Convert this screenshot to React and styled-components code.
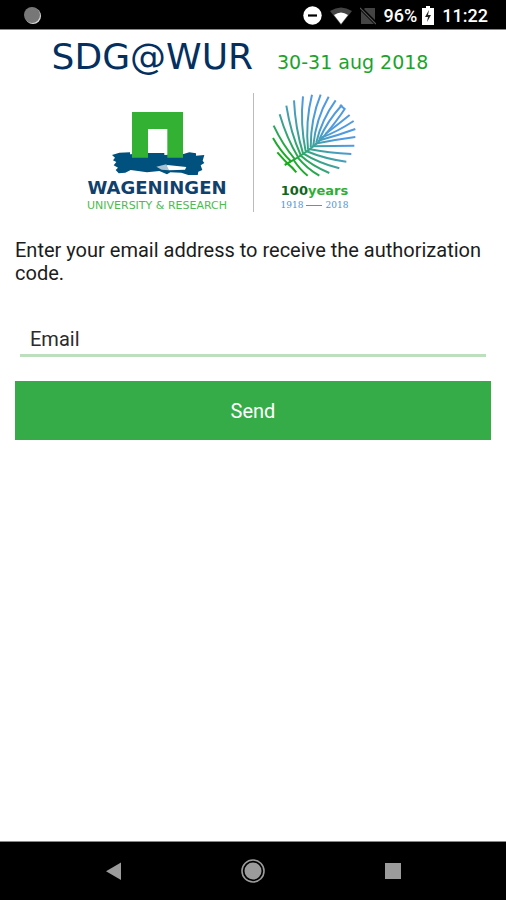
import React from "react";
import styled, { createGlobalStyle } from "styled-components";

const GlobalStyle = createGlobalStyle`
  * {
    box-sizing: border-box;
  }

  body {
    margin: 0;
    background: #fff;
    color: #1c1c1c;
    font-family: Roboto, "Liberation Sans", sans-serif;
  }
`;

// Leaf geometry: the point where a frond leaves the spine, its bend and its tip.
const fronds = [
  [127, 232, 112, 216, 96, 198],
  [138, 226, 106, 196, 83, 155],
  [149, 219, 112, 176, 85, 118],
  [158, 212, 124, 156, 103, 84],
  [166, 206, 136, 140, 123, 58],
  [173, 201, 150, 126, 146, 42],
  [181, 195, 164, 112, 173, 30],
  [188, 190, 180, 104, 200, 25],
  [196, 183, 196, 98, 226, 25],
  [204, 176, 212, 98, 250, 31],
  [213, 168, 228, 102, 271, 42],
  [222, 159, 246, 104, 290, 56],
  [240, 143, 276, 116, 313, 86],
  [228, 154, 276, 136, 325, 104],
  [218, 163, 276, 148, 330, 128],
  [208, 172, 270, 160, 330, 152],
  [199, 180, 260, 178, 327, 178],
  [190, 188, 250, 200, 318, 203],
  [182, 194, 240, 218, 303, 226],
  [173, 201, 220, 230, 282, 246],
  [165, 207, 202, 240, 252, 260],
  [157, 213, 184, 246, 222, 268],
  [145, 221, 164, 250, 187, 268],
  [127, 232, 140, 242, 153, 258],
];

const WageningenMark = () => (
  <svg width="96" height="64" viewBox="-9 0 288 192" aria-hidden="true">
    <path
      fill="#00517d"
      d="M0 132 L22 125 L54 124 L54 130 L105 126 L157 126 L157 132 L212 130 L232 124 L252 127 L252 134 L277 132 L272 149 L277 156 L266 163 L271 177 L259 182 L257 193 L232 193 L208 185 L175 184 L165 190 L142 180 L105 184 L56 177 L40 185 L20 187 L11 177 L18 170 L5 163 L13 153 L3 148 L9 140 Z"
    />
    <path fill="#fff" d="M108 54 H166 V124 H108 Z" />
    <path fill="#32b133" d="M60 3 H213 V140 H166 V54 H108 V140 H60 Z" />
    <path fill="#fff" d="M166 162 L223 168 L219 176 L171 178 L161 170 Z" />
    <path fill="#a9c3d2" d="M133 167 L163 160 L171 178 L149 176 Z" />
  </svg>
);

const LeafMark = () => (
  <svg width="85" height="85" viewBox="80 20 255 255" aria-hidden="true">
    <defs>
      <linearGradient
        id="leaf"
        gradientUnits="userSpaceOnUse"
        x1="125"
        y1="220"
        x2="235"
        y2="110"
      >
        <stop offset="0" stopColor="#18ab1c" />
        <stop offset="0.45" stopColor="#3aa38f" />
        <stop offset="1" stopColor="#4f9ae0" />
      </linearGradient>
    </defs>
    <g fill="none" stroke="url(#leaf)" strokeWidth="6">
      {fronds.map(([x, y, bendX, bendY, tipX, tipY]) => (
        <path
          key={`${tipX}-${tipY}`}
          d={`M${x} ${y} Q${bendX} ${bendY} ${tipX} ${tipY}`}
        />
      ))}
      <path d="M118 236 Q200 192 238 147 T298 68 L284 56" />
    </g>
  </svg>
);

const StatusBar = () => (
  <StatusRow>
    <svg width="18" height="18" viewBox="0 0 18 18" aria-hidden="true">
      <circle cx="9" cy="9" r="8" fill="#d9d9d9" />
      <circle cx="8" cy="8" r="8" fill="#777" />
    </svg>
    <StatusIcons>
      <svg width="19" height="19" viewBox="0 0 19 19" aria-hidden="true">
        <circle cx="9.5" cy="9.5" r="9.2" fill="#fff" />
        <path d="M5 9.5 H14" stroke="#000" strokeWidth="2.2" />
      </svg>
      <svg width="22" height="18" viewBox="0 0 22 18" aria-hidden="true">
        <path fill="#444" d="M0 4 Q11 -3 22 4 L11 18 Z" />
        <path fill="#fff" d="M4 8 Q11 3 18 8 L11 17 Z" />
      </svg>
      <svg width="16" height="18" viewBox="0 0 16 18" aria-hidden="true">
        <path fill="#444" d="M5 1 H15 V13 L4 2 Z M1 4 L14 17 H1 Z" />
        <path d="M0 1 L16 17" stroke="#555" strokeWidth="1.2" />
      </svg>
      <Battery>
        <StatusText>96%</StatusText>
        <svg width="12" height="19" viewBox="0 0 12 19" aria-hidden="true">
          <path fill="#fff" d="M4 0 H8 V2 H12 V19 H0 V2 H4 Z" />
          <path fill="#222" d="M7 4 L3 11 H6 L5 16 L9 9 H6 Z" />
        </svg>
      </Battery>
      <StatusText>11:22</StatusText>
    </StatusIcons>
  </StatusRow>
);

const NavigationBar = () => (
  <NavRow>
    <NavButton type="button" aria-label="Back">
      <svg width="24" height="24" viewBox="0 0 24 24">
        <path fill="#9b9b9b" d="M20 3.5 V21 L5 12.2 Z" />
      </svg>
    </NavButton>
    <NavButton type="button" aria-label="Home">
      <svg width="24" height="24" viewBox="0 0 24 24">
        <circle cx="12" cy="12" r="11" fill="none" stroke="#9b9b9b" strokeWidth="1.6" />
        <circle cx="12" cy="12" r="8.5" fill="#9b9b9b" />
      </svg>
    </NavButton>
    <NavButton type="button" aria-label="Overview">
      <svg width="24" height="24" viewBox="0 0 24 24">
        <path fill="#9b9b9b" d="M4 4 H20 V20 H4 Z" />
      </svg>
    </NavButton>
  </NavRow>
);

const App = () => (
  <Screen>
    <GlobalStyle />
    <StatusBar />
    <Content>
      <Heading>
        <Title>SDG@WUR</Title>
        <EventDate>30-31 aug 2018</EventDate>
      </Heading>
      <Logos>
        <University>
          <WageningenMark />
          <UniversityName>WAGENINGEN</UniversityName>
          <UniversityTagline>UNIVERSITY &amp; RESEARCH</UniversityTagline>
        </University>
        <Anniversary>
          <LeafMark />
          <Years>
            <b>100</b>years
          </Years>
          <Period>
            1918 <Dash /> 2018
          </Period>
        </Anniversary>
      </Logos>
      <Form onSubmit={event => event.preventDefault()}>
        <Intro>
          Enter your email address to receive the authorization code.
        </Intro>
        <EmailInput type="email" placeholder="Email" aria-label="Email" />
        <SendButton type="submit">Send</SendButton>
      </Form>
    </Content>
    <NavigationBar />
  </Screen>
);

const Screen = styled.div`
  display: flex;
  flex-direction: column;
  min-height: 100vh;
`;

const StatusRow = styled.div`
  display: flex;
  align-items: center;
  justify-content: space-between;
  height: 30px;
  padding: 2px 18px 0 24px;
  background: #000;
  border-bottom: 1px solid #888;
`;

const StatusIcons = styled.div`
  display: flex;
  align-items: center;
  gap: 8px;
`;

const Battery = styled.div`
  display: flex;
  align-items: center;
  gap: 5px;
`;

const StatusText = styled.span`
  color: #fff;
  font-size: 18px;
  font-weight: 500;
  line-height: 20px;
`;

const Content = styled.main`
  flex: 1;
`;

const Heading = styled.header`
  display: flex;
  align-items: baseline;
  justify-content: center;
  gap: 24px;
  padding: 5px 26px 0 0;
  font-family: "DejaVu Sans", Verdana, sans-serif;
`;

const Title = styled.h1`
  margin: 0;
  color: #04305f;
  font-size: 36px;
  font-weight: 400;
  line-height: 44px;
`;

const EventDate = styled.span`
  color: #1ba32a;
  font-size: 19px;
`;

const Logos = styled.div`
  display: flex;
  justify-content: center;
  padding: 14px 62px 0 0;
  font-family: "DejaVu Sans", Verdana, sans-serif;
`;

const University = styled.div`
  display: flex;
  flex-direction: column;
  align-items: center;
  padding: 18px 26px 0 0;
  border-right: 1px solid #bbb;
`;

const UniversityName = styled.span`
  margin-top: 2px;
  color: #10406c;
  font-size: 18px;
  font-weight: 700;
  line-height: 22px;
`;

const UniversityTagline = styled.span`
  color: #4dbb50;
  font-size: 11px;
  line-height: 13px;
`;

const Anniversary = styled.div`
  display: flex;
  flex-direction: column;
  align-items: center;
  padding-left: 18px;
`;

const Years = styled.span`
  margin-top: 4px;
  color: #2fae35;
  font-size: 13px;
  font-weight: 700;
  line-height: 18px;

  b {
    color: #10661c;
  }
`;

const Period = styled.span`
  display: flex;
  align-items: center;
  gap: 3px;
  color: #4d94dc;
  font-family: "DejaVu Serif", serif;
  font-size: 9px;
  line-height: 10px;
`;

const Dash = styled.i`
  width: 16px;
  height: 1px;
  background: #4d94dc;
`;

const Form = styled.form`
  display: flex;
  flex-direction: column;
  padding: 27px 15px 0;
`;

const Intro = styled.p`
  margin: 0;
  font-size: 20px;
  line-height: 23px;
`;

const EmailInput = styled.input`
  height: 36px;
  margin: 36px 5px 24px;
  padding: 2px 10px 0;
  border: 0;
  border-bottom: 3px solid #bddfbe;
  outline: 0;
  background: transparent;
  font: inherit;
  font-size: 20px;

  &::placeholder {
    color: #2b2b2b;
    opacity: 1;
  }
`;

const SendButton = styled.button`
  height: 59px;
  border: 0;
  background: #36ac49;
  color: #fff;
  font: inherit;
  font-size: 20px;
  cursor: pointer;
`;

const NavRow = styled.nav`
  display: flex;
  align-items: center;
  justify-content: space-around;
  height: 59px;
  padding: 0 43px;
  border-top: 1px solid #888;
  background: #000;
`;

const NavButton = styled.button`
  display: flex;
  padding: 0;
  border: 0;
  background: none;
  cursor: pointer;
`;

export default App;
